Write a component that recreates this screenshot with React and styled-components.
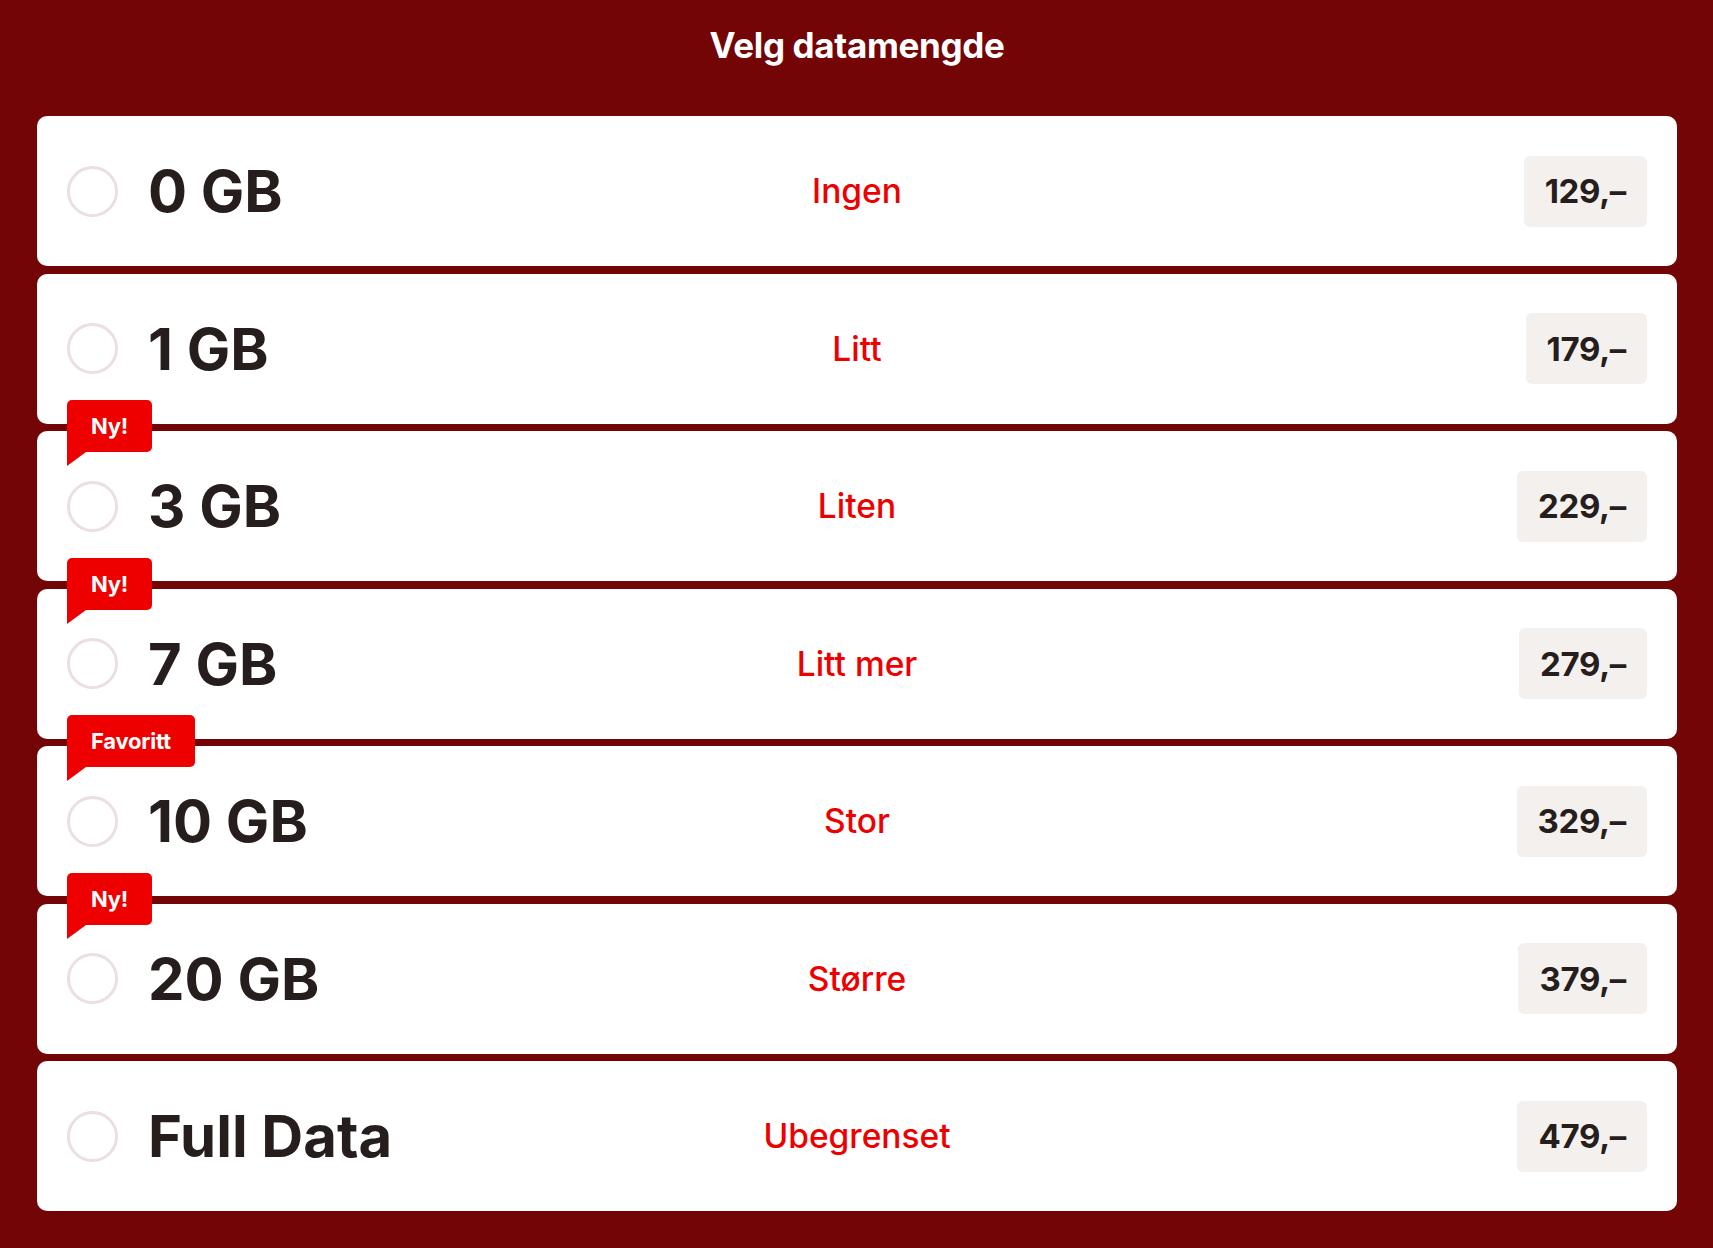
import styled, { createGlobalStyle } from "styled-components";

const GlobalStyle = createGlobalStyle`
  html, body {
    margin: 0;
    padding: 0;
    background-color: #730506;
  }
  body {
    font-family: Inter, "Noto Sans", sans-serif;
  }
`;

const Page = styled.div`
  min-height: 1248px;
  box-sizing: border-box;
  padding: 25px 36px 36px 37px;
`;

const Title = styled.h1`
  margin: 0 0 50px;
  text-align: center;
  color: #ffffff;
  font-size: 35px;
  line-height: 41px;
  font-weight: 700;
  letter-spacing: -0.01em;
`;

const List = styled.div`
  display: flex;
  flex-direction: column;
  gap: 7.5px;
`;

const Card = styled.label`
  position: relative;
  height: 150px;
  box-sizing: border-box;
  padding: 0 30px;
  background: #ffffff;
  border-radius: 10px;
  display: grid;
  grid-template-columns: 1fr auto 1fr;
  align-items: center;
  cursor: pointer;
`;

const Left = styled.div`
  display: flex;
  align-items: center;
  gap: 30px;
`;

const Radio = styled.span`
  width: 51px;
  height: 51px;
  box-sizing: border-box;
  border: 3px solid #ebdfdf;
  border-radius: 50%;
  flex-shrink: 0;
`;

const Amount = styled.span`
  color: #261d1d;
  font-size: 58px;
  font-weight: 700;
  line-height: 1;
`;

const Label = styled.span`
  color: #ee0000;
  font-size: 33.5px;
  font-weight: 500;
  text-align: center;
`;

const Price = styled.span`
  justify-self: end;
  height: 71px;
  display: flex;
  align-items: center;
  padding: 0 21px;
  background: #f4f0ed;
  border-radius: 6px;
  color: #261d1d;
  font-size: 33px;
  font-weight: 700;
  letter-spacing: -0.01em;
`;

const Badge = styled.span`
  position: absolute;
  left: 30px;
  top: -31px;
  height: 52px;
  display: flex;
  align-items: center;
  padding: 0 24px;
  background: #ee0000;
  border-radius: 5px 5px 5px 0;
  color: #ffffff;
  font-size: 22px;
  font-weight: 700;
  letter-spacing: -0.01em;

  &::after {
    content: "";
    position: absolute;
    left: 0;
    top: 100%;
    border-top: 14px solid #ee0000;
    border-right: 19px solid transparent;
  }
`;

const plans = [
  { amount: "0 GB", label: "Ingen", price: "129,–" },
  { amount: "1 GB", label: "Litt", price: "179,–" },
  { amount: "3 GB", label: "Liten", price: "229,–", badge: "Ny!" },
  { amount: "7 GB", label: "Litt mer", price: "279,–", badge: "Ny!" },
  { amount: "10 GB", label: "Stor", price: "329,–", badge: "Favoritt" },
  { amount: "20 GB", label: "Større", price: "379,–", badge: "Ny!" },
  { amount: "Full Data", label: "Ubegrenset", price: "479,–" },
];

const App = () => {
  return (
    <>
      <GlobalStyle />
      <Page>
        <Title>Velg datamengde</Title>
        <List>
          {plans.map((plan) => (
            <Card key={plan.amount}>
              {plan.badge && <Badge>{plan.badge}</Badge>}
              <Left>
                <Radio />
                <Amount>{plan.amount}</Amount>
              </Left>
              <Label>{plan.label}</Label>
              <Price>{plan.price}</Price>
            </Card>
          ))}
        </List>
      </Page>
    </>
  );
};

export default App;
